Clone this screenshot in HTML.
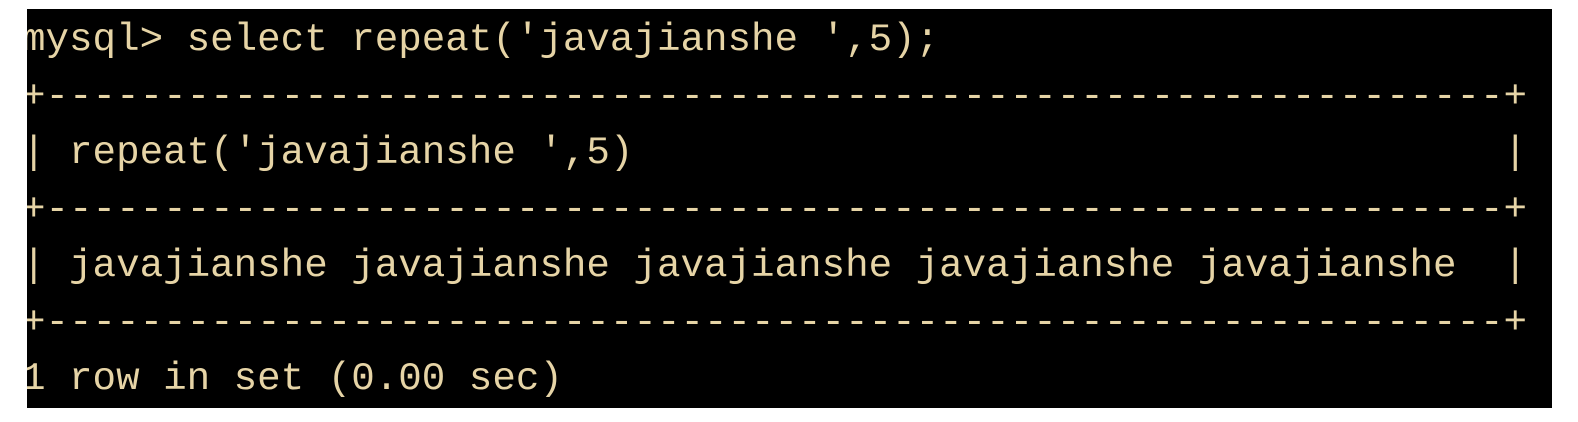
<!DOCTYPE html>
<html><head><meta charset="utf-8"><style>
html,body{margin:0;padding:0;background:#fff;width:1578px;height:422px;overflow:hidden}
.box{position:absolute;left:27px;top:9px;width:1525px;height:399px;background:#000;overflow:hidden}
pre{position:absolute;left:-5px;top:3px;margin:0;font-family:"Liberation Mono",monospace;font-size:39.2px;line-height:56.5px;color:#e6d4a6;white-space:pre}
</style></head><body>
<div class="box"><pre>mysql&gt; select repeat('javajianshe ',5);
+--------------------------------------------------------------+
| repeat('javajianshe ',5)                                     |
+--------------------------------------------------------------+
| javajianshe javajianshe javajianshe javajianshe javajianshe  |
+--------------------------------------------------------------+
1 row in set (0.00 sec)</pre></div>
</body></html>
